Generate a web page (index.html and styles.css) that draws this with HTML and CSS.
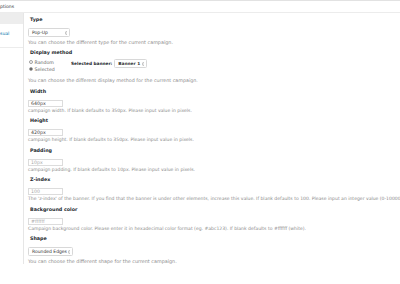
FILE: index.html
```html
<!DOCTYPE html>
<html>
<head>
<meta charset="utf-8">
<link rel="stylesheet" href="styles.css">
</head>
<body>
<div class="header"><span class="header-title">ptions</span></div>
<div class="panel">
  <nav class="tabs">
    <div class="tab tab-active"></div>
    <div class="tab tab-next"><a class="tab-link" href="#">sual</a></div>
  </nav>
  <main class="content">
    <section class="field field-first">
      <div class="label">Type</div>
      <div class="select select-type"><span class="select-text">Pop-Up</span><svg class="arrows" viewBox="0 0 4 6" width="2.5" height="4"><path d="M0.6 2.3 L2 0.8 L3.4 2.3 M0.6 3.7 L2 5.2 L3.4 3.7" fill="none" stroke="#444" stroke-width="0.9"/></svg></div>
      <p class="help help-select">You can choose the different type for the current campaign.</p>
    </section>
    <section class="field">
      <div class="label">Display method</div>
      <div class="method-row">
        <div class="radios">
          <div class="radio-line"><span class="radio"></span>Random</div>
          <div class="radio-line"><span class="radio radio-on"></span>Selected</div>
        </div>
        <div class="banner">
          <span class="banner-label">Selected banner:</span>
          <div class="select select-banner"><span class="select-text select-bold">Banner 1</span><svg class="arrows" viewBox="0 0 4 6" width="2.5" height="4"><path d="M0.6 2.3 L2 0.8 L3.4 2.3 M0.6 3.7 L2 5.2 L3.4 3.7" fill="none" stroke="#444" stroke-width="0.9"/></svg></div>
        </div>
      </div>
      <p class="help help-method">You can choose the different display method for the current campaign.</p>
    </section>
    <section class="field">
      <div class="label">Width</div>
      <div class="input">640px</div>
      <p class="help">campaign width. If blank defaults to 350px. Please input value in pixels.</p>
    </section>
    <section class="field">
      <div class="label">Height</div>
      <div class="input">420px</div>
      <p class="help">campaign height. If blank defaults to 350px. Please input value in pixels.</p>
    </section>
    <section class="field">
      <div class="label">Padding</div>
      <div class="input input-placeholder">10px</div>
      <p class="help">campaign padding. If blank defaults to 10px. Please input value in pixels.</p>
    </section>
    <section class="field">
      <div class="label">Z-index</div>
      <div class="input input-placeholder">100</div>
      <p class="help">The 'z-index' of the banner. If you find that the banner is under other elements, increase this value. If blank defaults to 100. Please input an integer value (0-1000000).</p>
    </section>
    <section class="field">
      <div class="label">Background color</div>
      <div class="input input-placeholder">#ffffff</div>
      <p class="help">Campaign background color. Please enter it in hexadecimal color format (eg. #abc123). If blank defaults to #ffffff (white).</p>
    </section>
    <section class="field">
      <div class="label">Shape</div>
      <div class="select select-shape"><span class="select-text">Rounded Edges</span><svg class="arrows" viewBox="0 0 4 6" width="2.5" height="4"><path d="M0.6 2.3 L2 0.8 L3.4 2.3 M0.6 3.7 L2 5.2 L3.4 3.7" fill="none" stroke="#444" stroke-width="0.9"/></svg></div>
      <p class="help help-select">You can choose the different shape for the current campaign.</p>
    </section>
  </main>
</div>
</body>
</html>
```

FILE: styles.css
```css
html, body {
  margin: 0;
  padding: 0;
  background: #ffffff;
  overflow: hidden;
}
body {
  width: 400px;
  height: 284px;
  font-family: "DejaVu Sans", Verdana, sans-serif;
  color: #23282d;
}
.header {
  box-sizing: border-box;
  height: 13px;
  border-top: 1px solid #e2e2e2;
  border-bottom: 1px solid #ececec;
  display: flex;
  align-items: center;
}
.header-title {
  font-size: 4.6px;
  color: #32373c;
  white-space: nowrap;
}
.panel {
  display: flex;
  align-items: stretch;
}
.tabs {
  width: 23px;
  flex: none;
  border-right: 1px solid #e6e6e6;
}
.tab-active {
  height: 11px;
  background: #ededed;
}
.tab-next {
  box-sizing: border-box;
  height: 24px;
  padding-top: 3px;
  border-bottom: 1px solid #ececec;
  line-height: 6px;
}
.tab-link {
  font-size: 4.6px;
  color: #0073aa;
  text-decoration: none;
}
.content {
  flex: 1;
  min-width: 0;
  padding: 3px 0 0 4px;
  white-space: nowrap;
  overflow: hidden;
}
.field {
  margin-top: 3.5px;
}
.field-first {
  margin-top: 0;
}
.label {
  margin-left: 2px;
  font-size: 4.8px;
  font-weight: bold;
  line-height: 8px;
  color: #23282d;
}
.help {
  margin: 1px 0 0 0;
  font-size: 4.55px;
  line-height: 6px;
  color: #8c8c8c;
}
.help-select {
  margin-top: 2px;
  font-size: 4.85px;
}
.help-method {
  margin-top: 5.5px;
  font-size: 4.8px;
}
.input {
  box-sizing: border-box;
  margin-top: 4px;
  width: 35px;
  height: 7px;
  border: 0.6px solid #dcdcdc;
  background: #ffffff;
  padding-left: 2px;
  font-size: 4.7px;
  line-height: 6px;
  color: #444444;
}
.input-placeholder {
  color: #aaaaaa;
}
.select {
  box-sizing: border-box;
  margin-top: 4px;
  height: 9px;
  border: 0.6px solid #d8d8d8;
  border-radius: 1.5px;
  background: #ffffff;
  display: flex;
  align-items: center;
  justify-content: space-between;
  padding: 0 2px 0 3px;
}
.select-text {
  font-size: 4.5px;
  color: #333333;
}
.select-bold {
  font-weight: bold;
  font-size: 4.3px;
}
.select-type {
  width: 42px;
}
.select-shape {
  width: 45px;
}
.select-banner {
  width: 33px;
  margin-top: 0;
  margin-left: 2px;
}
.arrows {
  display: block;
  flex: none;
}
.method-row {
  display: flex;
  align-items: flex-start;
  margin-top: 2px;
}
.radios {
  width: 43px;
  flex: none;
}
.radio-line {
  display: flex;
  align-items: center;
  height: 7px;
  font-size: 4.7px;
  color: #666666;
  padding-left: 1px;
}
.radio {
  box-sizing: border-box;
  width: 4px;
  height: 4px;
  border: 0.6px solid #a0a0a0;
  border-radius: 50%;
  margin-right: 1.5px;
  display: flex;
  align-items: center;
  justify-content: center;
  background: #fbfbfb;
}
.radio-on::after {
  content: "";
  width: 1.6px;
  height: 1.6px;
  border-radius: 50%;
  background: #555555;
}
.banner {
  display: flex;
  align-items: center;
  margin-top: 0.5px;
}
.banner-label {
  font-size: 4.3px;
  font-weight: bold;
  color: #23282d;
}
```
